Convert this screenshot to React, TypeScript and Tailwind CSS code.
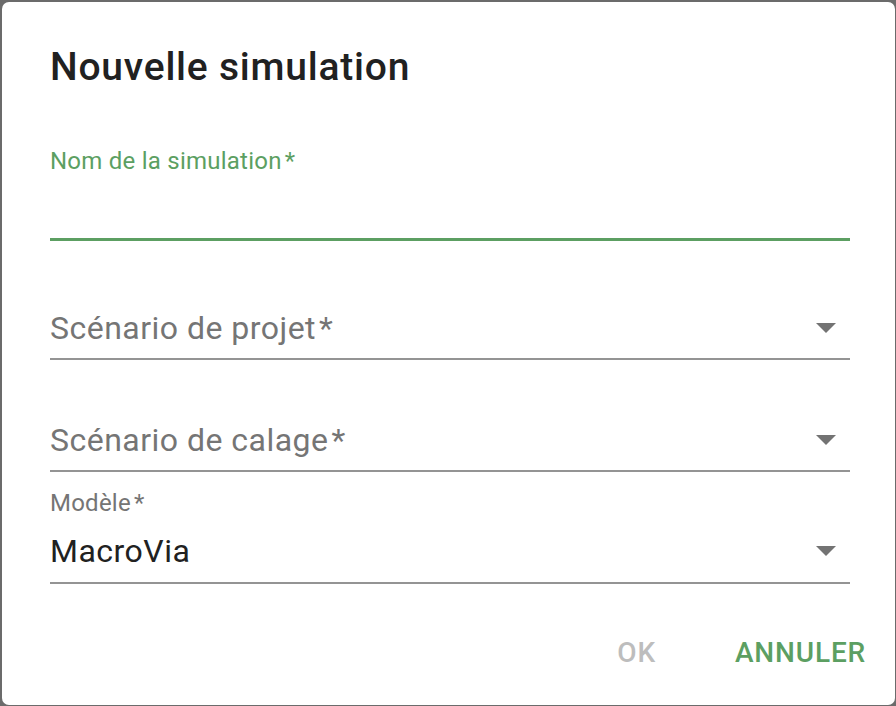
import React from "react";

function Arrow() {
  return (
    <svg width="20" height="10" viewBox="0 0 20 10" className="shrink-0">
      <path d="M0 0 L20 0 L10 10 Z" fill="#737373" />
    </svg>
  );
}

function SelectField({ label, value, h }: { label?: string; value?: string; h: string }) {
  return (
    <div className={`w-[800px] ${h} border-b-2 border-[#949494] flex items-center justify-between pr-[14px]`}>
      {value ? (
        <span className="text-[32px] text-[#212121] leading-none tracking-[0.015em]">{value}</span>
      ) : (
        <span className="text-[32px] text-[#757575] leading-none tracking-[0.015em]">
          {label}
          <span className="ml-[3px]">*</span>
        </span>
      )}
      <Arrow />
    </div>
  );
}

export default function App() {
  return (
    <div
      className="w-[896px] h-[706px] bg-[#6b6b6b] pt-[2px] pl-[2px] overflow-hidden"
      style={{ fontFamily: "Roboto, 'Noto Sans', sans-serif" }}
    >
      <div className="w-[893px] h-[703px] bg-white rounded-[7px] flex flex-col pl-[48px]">
        <div className="mt-[37px] h-[56px] flex items-center text-[39px] font-medium text-[#212121] tracking-[0.02em]">
          Nouvelle simulation
        </div>
        <div className="mt-[54px] h-[24px] flex items-center text-[24px] text-[#5c9f62] tracking-[0.01em]">
          Nom de la simulation<span className="ml-[3px]">*</span>
        </div>
        <div className="w-[800px] h-[68px] border-b-[3px] border-[#5c9f62]" />
        <div className="mt-[57px]">
          <SelectField label="Scénario de projet" h="h-[62px]" />
        </div>
        <div className="mt-[50px]">
          <SelectField label="Scénario de calage" h="h-[62px]" />
        </div>
        <div className="mt-[19px] h-[24px] flex items-center text-[24px] text-[#757575] tracking-[0.01em]">
          Modèle<span className="ml-[3px]">*</span>
        </div>
        <div className="mt-[5px]">
          <SelectField value="MacroVia" h="h-[64px]" />
        </div>
        <div className="mt-[45px] h-[48px] flex items-center justify-end pr-[29px] gap-[79px] text-[28px] font-medium tracking-[0.03em]">
          <span className="text-[#bdbdbd]">OK</span>
          <span className="text-[#5c9f62]">ANNULER</span>
        </div>
      </div>
    </div>
  );
}
